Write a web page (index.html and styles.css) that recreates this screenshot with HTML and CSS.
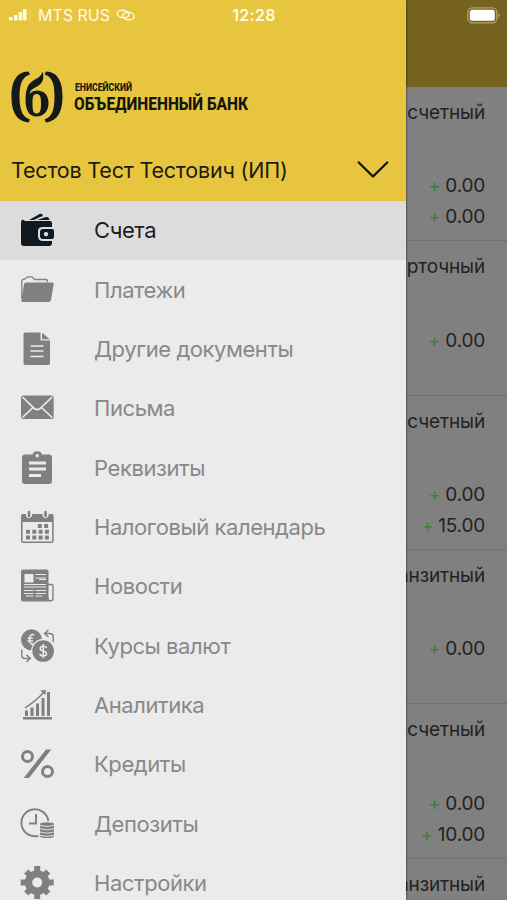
FILE: index.html
```html
<!DOCTYPE html>
<html lang="ru">
<head>
<meta charset="utf-8">
<title>Меню</title>
<link rel="stylesheet" href="styles.css">
</head>
<body>
<div class="screen">
  <main class="page">
    <div class="page-bar"></div>
    <section class="account"><h2>Расчетный</h2><div class="sums"><p><i>+</i> 0.00</p><p><i>+</i> 0.00</p></div></section>
    <section class="account"><h2>Карточный</h2><div class="sums"><p><i>+</i> 0.00</p></div></section>
    <section class="account"><h2>Расчетный</h2><div class="sums"><p><i>+</i> 0.00</p><p><i>+</i> 15.00</p></div></section>
    <section class="account"><h2>Транзитный</h2><div class="sums"><p><i>+</i> 0.00</p></div></section>
    <section class="account"><h2>Расчетный</h2><div class="sums"><p><i>+</i> 0.00</p><p><i>+</i> 10.00</p></div></section>
    <section class="account"><h2>Транзитный</h2></section>
  </main>

  <aside class="drawer">
    <header class="head">
      <div class="brand">
        <svg class="mark" width="52" height="52" viewBox="0 0 52 52" fill="#14191c">
          <path d="M17.500 .5C5 1 .5 11 .5 25.500S5 50 17.500 51.500L19 48.500C11.500 46 8.500 39 8.500 25.500S11.500 6 19 3.500Z"/>
          <path d="M35 .5C47 1 51.500 11 51.500 25.500S47 50 35 51.500L33.500 48.500C41 46 43.500 39 43.500 25.500S41 6 33.500 3.500Z"/>
          <path fill-rule="evenodd" d="M31.500 .5C34 8 31 13.500 25 16C21 18 19 19.500 18.500 23C20.500 20.500 23.500 19.500 27 19.500C34 20 37.500 25 37.500 32C37.500 40 33 45.500 25.500 45.500C18 45.500 14.500 39 14.500 29C14.500 17 17.500 12 24 8.500C28 6.500 30.500 4.500 31.500 .5ZM25.500 23C22 23 21.500 26 21.500 32C21.500 39 22 42.500 25.500 42.500C29.500 42.500 30 38.500 30 32C30 25.500 29 23 25.500 23Z"/>
        </svg>
        <svg class="wordmark" width="180" height="38" viewBox="0 0 180 38">
          <text x="1" y="11.500" font-size="11" textLength="57" lengthAdjust="spacingAndGlyphs">ЕНИСЕЙСКИЙ</text>
          <text x="0" y="30.500" font-size="18.500" textLength="174" lengthAdjust="spacingAndGlyphs">ОБЪЕДИНЕННЫЙ БАНК</text>
        </svg>
      </div>
      <div class="user">
        <span>Тестов Тест Тестович (ИП)</span>
        <svg width="32" height="18" viewBox="0 0 32 18" fill="none" stroke="#11140d" stroke-width="2.300" stroke-linecap="round" stroke-linejoin="round"><path d="M1.800 1.500L16 15.500L30.200 1.500"/></svg>
      </div>
    </header>
    <nav class="menu">
      <a class="item active">
        <svg viewBox="0 0 34 34"><path d="M9 7L20 .8Q22 0 23 3L20 4L14 7ZM17 7L26 4Q29 3.500 29.500 7Z"/><path d="M3 6.500L5 8H30Q32 8 32 10V14H23Q18 14 18 18V23Q18 28 23 28H32V30Q32 33 29 33H4Q1 33 1 30V9Q1 7 3 6.500Z"/><path fill-rule="evenodd" d="M23 16H32Q34 16 34 18V24Q34 26 32 26H23Q20 26 20 23V19Q20 16 23 16ZM26 19a2.200 2.200 0 1 0 .01 0Z"/></svg>
        <span>Счета</span></a>
      <a class="item">
        <svg viewBox="0 0 34 34"><path class="line" stroke-width="1.300" d="M1.800 25V8Q1.800 6.800 3 6.500L5 6L7.500 3.800H12L14.500 6.500H26Q27.500 6.500 27.500 9"/><path d="M6 9.500H32.500Q34 9.500 33.700 11L31 27Q30.500 29 28.500 29H3Q1 29 1.300 27L4 11.500Q4.300 9.500 6 9.500Z"/></svg>
        <span>Платежи</span></a>
      <a class="item">
        <svg viewBox="0 0 34 34"><path d="M5.500 .5H20.500V8.500H30V31Q30 33 28 33H5.500Q3.500 33 3.500 31V2.500Q3.500 .5 5.500 .5ZM22 .8L29.700 7.300H22Z"/><path class="cut" stroke-width="1.500" d="M10.500 14H23.500M10.500 19H23.500M10.500 24.500H23.500"/></svg>
        <span>Другие документы</span></a>
      <a class="item">
        <svg viewBox="0 0 34 34"><rect x="1" y="4.500" width="32.700" height="23.500" rx="2.500"/><path class="cut" stroke-width="1.700" d="M2.500 6L14.500 17.500Q17.300 19.800 20 17.500L32.200 6M2.500 26.500L13 16.500M32.200 26.500L21.500 16.500"/></svg>
        <span>Письма</span></a>
      <a class="item">
        <svg viewBox="0 0 34 34"><path fill-rule="evenodd" d="M5 3.500H12.500Q13.500 .2 17.200 .2T22 3.500H29Q32 3.500 32 6.500V30Q32 33 29 33H5Q2 33 2 30V6.500Q2 3.500 5 3.500ZM17.200 3a1.700 1.700 0 1 0 .01 0Z"/><path class="cut" stroke-width="3" d="M9 12H26M9 18H26M9 24.500H21"/></svg>
        <span>Реквизиты</span></a>
      <a class="item">
        <svg viewBox="0 0 34 34"><path fill-rule="evenodd" d="M3 4H6V6Q9 10.500 12 6V4H22.500V6Q25.500 10.500 28.500 6V4H31.500Q33.700 4 33.700 6V31Q33.700 33 31.700 33H3Q1 33 1 31V6Q1 4 3 4ZM2.600 12V31.400H32.100V12Z"/><path class="line" stroke-width="2.600" stroke-linecap="round" d="M9 2V6M25.500 2V6"/><path class="line" stroke-width="4" stroke-dasharray="4 2.300" d="M17.800 16H29.500M6 21.800H29.500M6 27.500H29.500"/></svg>
        <span>Налоговый календарь</span></a>
      <a class="item">
        <svg viewBox="0 0 34 34"><rect x="1" y=".5" width="27.500" height="32" rx="2"/><path class="line" stroke-width="1.400" d="M28 15.500H31.500Q33 15.500 33 17V29.500Q33 31.800 30.500 31.800H27Q28.500 31 28.500 29"/><path fill="#ebebeb" d="M4.500 5H13.500V13.500H4.500Z"/><path class="cut" stroke-width="1.200" d="M15.500 5.500H26M15.500 9H26M19 10.500H26M4 15.500H26M4 18H26M4 21.500H13.500M15.500 21.500H26M4 24.500H13.500M15.500 24.500H26M6 27H13.500M15.500 27H22"/></svg>
        <span>Новости</span></a>
      <a class="item">
        <svg viewBox="0 0 34 34"><circle cx="11.500" cy="10.800" r="10.500"/><circle cx="23.200" cy="22" r="11.500" stroke="#ebebeb" stroke-width="1.300"/><path class="cut" stroke-width="1.500" d="M14.500 6Q9.500 4 9.500 11Q9.500 16 14 15M7.500 9.300H13M7.500 12H13"/><path class="cut" stroke-width="1.500" d="M26.500 19Q26 17.200 23.300 17.200Q20.200 17.200 20.200 19.500Q20.200 21.500 23.300 22Q26.500 22.500 26.500 24.800Q26.500 27 23.300 27Q20 27 20 24.800M23.300 15V29"/><path class="line" stroke-width="1.400" d="M33.200 13V8Q33.200 4.500 29.500 4.500H25M28.500 1L24.500 4.500L28.500 8M1.700 20.500V25.500Q1.700 29.500 5 29.500H10M6.500 25.800L10.300 29.500L6.500 33"/></svg>
        <span>Курсы валют</span></a>
      <a class="item">
        <svg viewBox="0 0 34 34"><path d="M3 29H32V31.500H3ZM5 22.500H8V28H5ZM10.500 19.500H13.500V28H10.500ZM16 15.500H19V28H16ZM21.500 10H24.500V28H21.500ZM27 4H30V28H27ZM20 2.500L26 2L25.500 7Z"/><path class="line" stroke-width="1.500" d="M5 19.800Q15 14 24.500 3.500"/></svg>
        <span>Аналитика</span></a>
      <a class="item">
        <svg viewBox="0 0 34 34"><path d="M26 2.500H31.300L9 31H3.700Z"/><circle class="line" stroke-width="3" cx="7.500" cy="9.500" r="5"/><circle class="line" stroke-width="3" cx="27.500" cy="24.500" r="5"/></svg>
        <span>Кредиты</span></a>
      <a class="item">
        <svg viewBox="0 0 34 34"><path class="line" stroke-width="1.900" d="M28.300 14A13.500 13.500 0 1 0 18.500 28.800"/><path class="line" stroke-width="2" d="M16 7V16.500H9"/><path d="M20 17Q20 15.200 27 15.200T34 17V29Q34 31 27 31T20 29Z"/><path class="cut" stroke-width=".9" d="M20 18.300Q27 20.800 34 18.300M20 21.700Q27 24.200 34 21.700M20 25Q27 27.500 34 25M20 28.300Q27 30.500 34 28.300"/></svg>
        <span>Депозиты</span></a>
      <a class="item">
        <svg viewBox="0 0 34 34"><g><circle cx="17.200" cy="16.500" r="12.300"/><path class="line" stroke-width="6" d="M17.200 0V33M.7 16.500H33.700M6.200 5.500L28.200 27.500M28.200 5.500L6.200 27.500"/></g><circle cx="17.200" cy="16.500" r="5" fill="#ebebeb"/></svg>
        <span>Настройки</span></a>
    </nav>
  </aside>

  <div class="status">
    <div class="carrier">
      <svg width="23" height="12" viewBox="0 0 23 12" fill="#fffdf0"><rect x="0" y="8" width="3.500" height="3.500" rx="1"/><rect x="5" y="6" width="3.500" height="5.500" rx="1"/><rect x="9.700" y="3" width="3.500" height="8.500" rx="1"/><rect x="14" y="0" width="3.500" height="11.500" rx="1"/><rect x="19.500" y="0" width="3" height="11.500" rx="1" opacity=".12"/></svg>
      <span>MTS RUS</span>
      <svg width="20" height="12" viewBox="0 0 20 12" fill="none" stroke="#fff8dc" stroke-width="1.500"><ellipse cx="7" cy="5" rx="5.800" ry="3.700" transform="rotate(8 7 5)"/><ellipse cx="12.500" cy="7" rx="5.800" ry="3.700" transform="rotate(8 12.500 7)"/></svg>
    </div>
    <time>12:28</time>
    <svg class="battery" width="34" height="17" viewBox="0 0 34 17"><rect x=".8" y=".8" width="29" height="15" rx="4.500" fill="none" stroke="#b2a36c" stroke-width="1.300"/><rect x="2.800" y="2.800" width="25" height="11" rx="2.500" fill="#fff"/><path d="M31 6Q33 7 33 8.300T31 11Z" fill="#a89652"/></svg>
  </div>
</div>
</body>
</html>
```
FILE: styles.css
```css
* { box-sizing: border-box; }
body { margin: 0; font-family: Inter, "Noto Sans", sans-serif; }
h2, p { margin: 0; font-weight: 400; }
.screen { position: relative; width: 507px; height: 900px; overflow: hidden; background: #808080; }

.page-bar { height: 87px; background: #75621e; }
.account {
  display: flex; flex-direction: column; align-items: flex-end;
  height: 154.350px; padding: 10px 22px 0 0;
  border-bottom: 1px solid #707070;
  color: #222; font-size: 19px; line-height: 31px;
}
.account h2 { font-size: 19px; letter-spacing: -0.150px; }
.sums { display: flex; flex-direction: column; align-items: flex-end; margin-top: 42.300px; }
.sums p { height: 31px; letter-spacing: -0.200px; }
.sums i { font-style: normal; color: #3f7d3a; font-size: 18px; line-height: 1; }

.drawer {
  position: absolute; inset: 0 auto 0 0; width: 405.500px;
  display: flex; flex-direction: column;
  background: #ebebeb; box-shadow: 0 0 3px rgba(0, 0, 0, .6);
}
.head { height: 200.500px; flex: none; background: #e7c53f; padding: 71px 16.500px 0 11px; }
.brand { display: flex; gap: 11px; height: 70px; }
.wordmark { margin-top: 8px; overflow: visible; font-family: Roboto, sans-serif; font-weight: 800; fill: #14170c; }
.user { display: flex; align-items: center; justify-content: space-between; height: 58px; font-size: 21.500px; color: #1a1b0c; }
.user span { letter-spacing: -0.200px; white-space: nowrap; }
.menu { display: flex; flex-direction: column; }
.item {
  display: flex; align-items: center; gap: 40px; flex: none;
  height: 59.350px; padding-left: 20px;
  font-size: 22px; letter-spacing: -0.430px; color: #888; fill: #808080; white-space: nowrap;
}
.item svg { width: 34px; height: 34px; flex: none; }
.item.active { background: #dcdcdc; color: #1c1d20; fill: #101820; }
.line { fill: none; stroke: #808080; }
.cut { fill: none; stroke: #ebebeb; }

.status {
  position: absolute; inset: 0 0 auto 0; height: 30px; padding: 0 6px 0 9px;
  display: grid; grid-template-columns: 1fr auto 1fr; align-items: center;
  color: #fffbe8; font-size: 16px;
}
.carrier { display: flex; align-items: center; gap: 6px; }
.status time { margin-left: -2px; font-weight: 600; letter-spacing: .3px; }
.battery { justify-self: end; }
```
